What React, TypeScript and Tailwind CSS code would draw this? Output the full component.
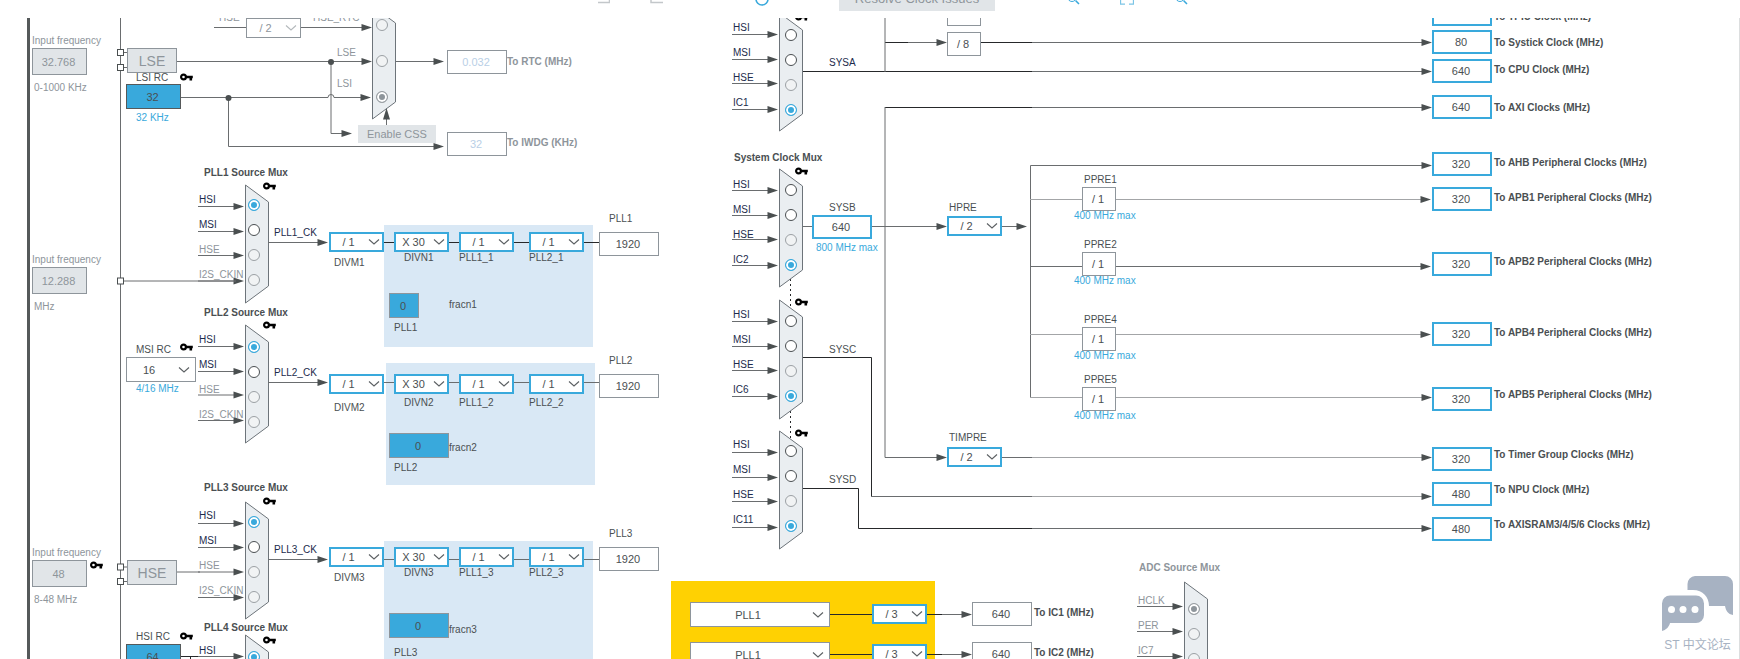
import { useId } from 'react';
import type { ReactNode } from 'react';

const tones = {
  dark: 'stroke-[#26282a]',
  mid: 'stroke-[#6a6d6f]',
  light: 'stroke-[#a3a5a7]',
};

const textColors = {
  normal: 'text-[#4a4f52]',
  navy: 'text-[#1c2b4c]',
  muted: 'text-[#8e959b]',
  blue: 'text-[#39a9dc]',
};

const boxKinds = {
  plain: 'border bg-white border-[#8e959b] text-[#4a4f52]',
  active: 'border-2 bg-white border-[#39a9dc] text-[#4a4f52]',
  filled: 'border bg-[#39a9dc] border-[#8e959b] text-[#4a4f52]',
  source: 'border bg-[#39a9dc] border-[#55595a] text-[#4a4f52]',
  off: 'border bg-[#e1e5e8] border-[#8e959b] text-[#8e959b]',
  faint: 'border bg-white border-[#8e959b] text-[#b9cfe6]',
};

type Tone = keyof typeof tones;
type TextColor = keyof typeof textColors;
type BoxKind = keyof typeof boxKinds;

interface TextProps {
  x: number;
  y: number;
  color?: TextColor;
  bold?: boolean;
  htmlFor?: string;
  children: ReactNode;
}

// y is the vertical middle of the line of text
function Text({ x, y, color = 'normal', bold, htmlFor, children }: TextProps) {
  const Tag = htmlFor ? 'label' : 'span';
  return (
    <Tag
      htmlFor={htmlFor}
      className={`absolute text-[10px] leading-3 whitespace-nowrap ${bold ? 'font-bold' : ''} ${textColors[color]}`}
      style={{ left: x, top: y - 6 }}
    >
      {children}
    </Tag>
  );
}

interface FieldProps {
  id?: string;
  x: number;
  y: number;
  w?: number;
  h?: number;
  kind?: BoxKind;
  value: string;
  name?: string;
  disabled?: boolean;
}

function Box({ id, x, y, w = 60, h = 24, kind = 'plain', value, name }: FieldProps) {
  return (
    <input
      id={id}
      aria-label={name}
      readOnly
      value={value}
      className={`absolute pr-0.5 text-center text-[11px] leading-3 outline-none ${boxKinds[kind]}`}
      style={{ left: x, top: y, width: w, height: h }}
    />
  );
}

function Drop({ id, x, y, w = 55, h = 20, kind = 'active', value, name, disabled }: FieldProps) {
  const wide = w > 55;
  return (
    <div className="absolute flex" style={{ left: x, top: y, width: w, height: h }}>
      <select
        id={id}
        aria-label={name}
        disabled={disabled}
        defaultValue={value}
        className={`block size-full appearance-none text-center text-[11px] leading-3 outline-none ${wide ? 'pr-6' : 'pr-4'} ${boxKinds[kind]} disabled:text-[#8e959b] disabled:opacity-100`}
      >
        <option>{value}</option>
      </select>
      <svg
        viewBox="0 0 12 8"
        className={`pointer-events-none absolute inset-y-0 my-auto h-2 w-3 fill-none ${wide ? 'right-1.5' : 'right-1'} ${disabled ? 'stroke-[#b4b9bc]' : 'stroke-[#5c6063]'}`}
      >
        <path d="M1 1.500 6 6l5-4.500" strokeWidth="1.100" />
      </svg>
    </div>
  );
}

function KeyIcon({ x, y }: { x: number; y: number }) {
  return (
    <svg viewBox="0 0 13 8" className="absolute h-2 w-[13px]" style={{ left: x, top: y - 4 }}>
      <circle cx="3.500" cy="4" r="2.400" fill="none" stroke="#000" strokeWidth="2.200" />
      <path d="M5.500 2.800h7.300v2.400h-.7v2.400H9.500V5.200h-4z" fill="#000" />
    </svg>
  );
}

function Wire({ d, tone = 'mid' }: { d: string; tone?: Tone }) {
  return <path d={d} fill="none" className={tones[tone]} />;
}

function Arrow({ x, y }: { x: number; y: number }) {
  return <path d={`M${x} ${y}l-10.500-3.500v7z`} fill="#4a4f50" />;
}

interface Signal {
  label: string;
  labelY: number;
  radioY: number;
  wireY: number;
  off?: boolean;
  color?: TextColor;
  checked?: boolean;
}

interface MuxProps {
  name: string;
  x: number;
  top: number;
  bottom: number;
  signals: Signal[];
  radioInset?: number;
}

function Mux({ name, x, top, bottom, signals, radioInset = 3 }: MuxProps) {
  const id = useId();
  const right = x + 23;
  return (
    <>
      <svg className="pointer-events-none absolute top-0 left-0 size-full overflow-visible">
        <path
          d={`M${x + 0.5} ${top}L${right + 0.5} ${top + 17}V${bottom - 17}L${x + 0.5} ${bottom}z`}
          fill="#eaeef1"
          stroke="#6d747a"
        />
        {signals.map((s) => (
          <g key={s.label}>
            <Wire d={`M${x - 47} ${s.wireY}H${x - 8}`} />
            <Arrow x={x - 1} y={s.wireY} />
          </g>
        ))}
      </svg>
      {signals.map((s) => (
        <div key={s.label}>
          <Text
            x={x - 46}
            y={s.labelY}
            color={s.color ?? (s.off ? 'muted' : 'navy')}
            htmlFor={`${id}${s.label}`}
          >
            {s.label}
          </Text>
          <input
            id={`${id}${s.label}`}
            type="radio"
            name={name}
            disabled={s.off}
            defaultChecked={s.checked}
            className="absolute size-3 appearance-none rounded-full border border-[#4a4f52] bg-white checked:border-[#39a9dc] checked:bg-[#39a9dc] checked:shadow-[inset_0_0_0_2px_#fff] disabled:border-[#9ba0a4] disabled:bg-[#f1f3f4] disabled:checked:bg-[#8e959b]"
            style={{ left: x + radioInset, top: s.radioY - 6 }}
          />
        </div>
      ))}
    </>
  );
}

function sourceSignals(labels: number[], radios: number[], wires: number[]): Signal[] {
  return ['HSI', 'MSI', 'HSE', 'I2S_CKIN'].map((label, i) => ({
    label,
    labelY: labels[i],
    radioY: radios[i],
    wireY: wires[i],
    off: i > 1,
    checked: i === 0,
  }));
}

function systemSignals(last: string, labelY: number, radioY: number, wireY: number): Signal[] {
  return ['HSI', 'MSI', 'HSE', last].map((label, i) => ({
    label,
    labelY: labelY + i * 25,
    radioY: radioY + i * 25,
    wireY: wireY + i * 25 - (i === 2 ? 1 : 0),
    off: i === 2,
    color: 'navy',
    checked: i === 3,
  }));
}

interface PllProps {
  n: number;
  y: number;
  wireY: number;
  labelY: number;
  subY: number;
  bgX: number;
  bgY: number;
  fracY: number;
  fracW: number;
  fracLabelY: number;
  nameY: number;
  tone: Tone;
}

// One PLL chain: DIVM -> DIVN -> two post dividers -> output value
function Pll({ n, y, wireY, labelY, subY, bgX, bgY, fracY, fracW, fracLabelY, nameY, tone }: PllProps) {
  const id = useId();
  return (
    <>
      <div className="absolute h-[122px] w-[209px] bg-[#d9e8f5]" style={{ left: bgX, top: bgY }} />
      <svg className="pointer-events-none absolute top-0 left-0 size-full overflow-visible">
        <Wire d={`M268 ${wireY}H320`} />
        <Arrow x={328} y={wireY} />
        <Wire d={`M384 ${wireY}H599`} tone={tone} />
      </svg>
      <Text x={274} y={wireY - 9.5} color="navy">{`PLL${n}_CK`}</Text>
      <Drop id={`${id}m`} x={329} y={y} value="/ 1" />
      <Text x={334} y={labelY} htmlFor={`${id}m`}>{`DIVM${n}`}</Text>
      <Drop id={`${id}n`} x={394} y={y} value="X 30" />
      <Text x={404} y={subY} htmlFor={`${id}n`}>{`DIVN${n}`}</Text>
      <Drop id={`${id}p`} x={459} y={y} value="/ 1" />
      <Text x={459} y={subY} htmlFor={`${id}p`}>{`PLL1_${n}`}</Text>
      <Drop id={`${id}q`} x={529} y={y} value="/ 1" />
      <Text x={529} y={subY} htmlFor={`${id}q`}>{`PLL2_${n}`}</Text>
      <Text x={609} y={y - 13} htmlFor={`${id}o`}>{`PLL${n}`}</Text>
      <Box id={`${id}o`} x={599} y={y} value="1920" />
      <Box id={`${id}f`} x={389} y={fracY} w={fracW} h={25} kind="filled" value="0" />
      <Text x={449} y={fracLabelY} htmlFor={`${id}f`}>{`fracn${n}`}</Text>
      <Text x={394} y={nameY}>{`PLL${n}`}</Text>
    </>
  );
}

function InputFrequency({ y, value, range }: { y: number; value: string; range: string }) {
  const id = useId();
  return (
    <>
      <Text x={32} y={y - 7} color="muted" htmlFor={id}>
        Input frequency
      </Text>
      <Box id={id} x={32} y={y} w={55} h={27} kind="off" value={value} />
      <Text x={34} y={y + 40} color="muted">
        {range}
      </Text>
    </>
  );
}

function Oscillator({ y, name }: { y: number; name: string }) {
  return (
    <button
      type="button"
      className="absolute left-[127px] h-[25px] w-[50px] border border-[#8e959b] bg-[#e1e5e8] text-sm leading-3 text-[#8e959b]"
      style={{ top: y }}
    >
      {name}
    </button>
  );
}

const outputs = [
  { label: 'To TPIU Clock (MHz)', value: '80', y: 2, labelY: 17 },
  { label: 'To Systick Clock (MHz)', value: '80', y: 30, labelY: 43 },
  { label: 'To CPU Clock (MHz)', value: '640', y: 59, labelY: 70 },
  { label: 'To AXI Clocks (MHz)', value: '640', y: 95, labelY: 108 },
  { label: 'To AHB Peripheral Clocks (MHz)', value: '320', y: 152, labelY: 163 },
  { label: 'To APB1 Peripheral Clocks (MHz)', value: '320', y: 187, labelY: 198 },
  { label: 'To APB2 Peripheral Clocks (MHz)', value: '320', y: 252, labelY: 262 },
  { label: 'To APB4 Peripheral Clocks (MHz)', value: '320', y: 322, labelY: 333 },
  { label: 'To APB5 Peripheral Clocks (MHz)', value: '320', y: 387, labelY: 395 },
  { label: 'To Timer Group Clocks (MHz)', value: '320', y: 447, labelY: 455 },
  { label: 'To NPU Clock (MHz)', value: '480', y: 482, labelY: 490 },
  { label: 'To AXISRAM3/4/5/6 Clocks (MHz)', value: '480', y: 517, labelY: 525 },
];

const busPrescalers = [
  { name: 'PPRE1', y: 187 },
  { name: 'PPRE2', y: 252 },
  { name: 'PPRE4', y: 327 },
  { name: 'PPRE5', y: 387 },
];

const rtcSignals = [
  { label: 'HSE_RTC', x: 313, y: 18, radioY: 25 },
  { label: 'LSE', x: 337, y: 53, radioY: 61 },
  { label: 'LSI', x: 337, y: 84, radioY: 97 },
];

const wires: { d: string; tone?: Tone }[] = [
  { d: 'M120.500 18V660' },
  { d: 'M120.500 52.500H127M120.500 67.500H127M120.500 567H127M120.500 581.500H127' },
  // RTC and watchdog
  { d: 'M214 27.500H246M301 27.500H364' },
  { d: 'M177 61.500H364M396 61.500H436' },
  { d: 'M181 97.500H328q0-3 3-3t3 3H364' },
  { d: 'M331 62V133.500H345' },
  { d: 'M228.500 98V146.500H436' },
  { d: 'M386.500 125V118' },
  { d: 'M181 656.500H198M190.500 656V660', tone: 'dark' },
  // system muxes
  { d: 'M802 71.500H1032M885 107.500H1032M981 42.500H1032', tone: 'dark' },
  { d: 'M1032 71.500H1424M1032 107.500H1424M1032 42.500H1424' },
  { d: 'M885 42.500H908', tone: 'dark' },
  { d: 'M908 42.500H940' },
  { d: 'M885 18V72M885 107V457.500' },
  { d: 'M802 226.500H812M872 226.500H940M1002 226.500H1020' },
  { d: 'M885 457.500H940' },
  { d: 'M802 357.500H871.500V496.500', tone: 'dark' },
  { d: 'M871 496.500H1032' },
  { d: 'M1032 496.500H1424', tone: 'light' },
  { d: 'M802 488.500H858.500V528.500H1032', tone: 'dark' },
  { d: 'M1032 528.500H1424' },
  { d: 'M1002 457.500H1032' },
  { d: 'M1032 457.500H1424', tone: 'light' },
  // bus prescalers
  { d: 'M1424 165.500H1030.500V397.500' },
  { d: 'M1030 199.500H1424M1030 334.500H1424M1030 397.500H1424', tone: 'light' },
  { d: 'M1030 266.500H1424' },
];

const arrows = [
  [372, 27.5], [372, 61.5], [444, 61.5], [352, 133.5], [444, 146.5],
  [947, 42.5], [947, 226.5], [947, 457.5], [1027, 226.5],
  [1432, 42.5], [1432, 71.5], [1432, 107.5], [1432, 165.5], [1431, 199.5], [1431, 266.5],
  [1431, 334.5], [1432, 397.5], [1432, 457.5], [1432, 496.5], [1432, 528.5],
];

const ports = [[120.5, 52.5], [120.5, 67.5], [120.5, 281], [120.5, 567], [120.5, 581.5]];

const keys = [
  [180, 77], [263, 186], [263, 325], [180, 347], [263, 501], [90, 565], [180, 636], [263, 640],
  [795, 17], [795, 171], [795, 302], [795, 433],
];

function SearchIcon() {
  return (
    <svg viewBox="0 0 14 24" className="h-6 w-3.5 fill-none stroke-[#39a9dc]">
      <circle cx="6" cy="10" r="4.500" />
      <path d="M9.500 13.500 13 17" strokeWidth="1.500" />
    </svg>
  );
}

function Toolbar() {
  return (
    <header className="h-[18px] shrink-0 overflow-hidden">
      <div className="-mt-[13px] flex h-6 items-center justify-center pl-[46px]">
        <button type="button" aria-label="Undo" className="mr-10">
          <svg viewBox="0 0 12 24" className="h-6 w-3 fill-none stroke-[#c3c7ca]">
            <path d="M0 15.500h11.500V8H2" strokeWidth="1.500" />
          </svg>
        </button>
        <button type="button" aria-label="Redo" className="mr-[92px]">
          <svg viewBox="0 0 13 24" className="h-6 w-[13px] fill-none stroke-[#c3c7ca]">
            <path d="M13 15.500H1V8h10" strokeWidth="1.500" />
          </svg>
        </button>
        <button type="button" aria-label="Refresh" className="mr-[70px]">
          <svg viewBox="0 0 14 24" className="h-6 w-3.5 fill-none stroke-[#39a9dc]">
            <circle cx="7" cy="12" r="6" strokeWidth="1.600" />
          </svg>
        </button>
        <button type="button" className="h-6 w-[156px] bg-[#e1e5e8] text-[13px] text-[#8e959b]">
          Resolve Clock Issues
        </button>
        <button type="button" aria-label="Zoom in" className="ml-[71px]">
          <SearchIcon />
        </button>
        <button type="button" aria-label="Fit" className="mx-10">
          <svg viewBox="0 0 14 24" className="h-6 w-3.5 fill-none stroke-[#7cc5e6]">
            <path d="M.5 13v4.200H5M13.500 13v4.200H9M.5 9V4.500H5M13.500 9V4.500H9" strokeWidth="1.300" />
          </svg>
        </button>
        <button type="button" aria-label="Zoom out">
          <SearchIcon />
        </button>
      </div>
    </header>
  );
}

function ForumBadge() {
  return (
    <a href="#forum" className="absolute right-1.5 bottom-1.5 flex flex-col items-center gap-1.5 text-[#a7b2c2]">
      <svg viewBox="0 0 71 55" className="h-[55px] w-[71px]" fill="currentColor">
        <path d="M33 0h30a8 8 0 0 1 8 8v31c-5-1-7-4-8-9H47C47 21 41 14 31 14H25.500V8A8 8 0 0 1 33 0z" />
        <path d="M8 19.500h26a8 8 0 0 1 8 8V39a8 8 0 0 1-8 8H8c-1 4-4 7-8 8V27.500a8 8 0 0 1 8-8z" />
        <g fill="#fff">
          <circle cx="9.500" cy="33.500" r="3.500" />
          <circle cx="21" cy="33.500" r="3.500" />
          <circle cx="33" cy="33.500" r="3.500" />
        </g>
      </svg>
      <span className="text-xs leading-4 whitespace-nowrap">ST 中文论坛</span>
    </a>
  );
}

export default function App() {
  return (
    <div className="flex h-screen flex-col overflow-hidden bg-white font-['Liberation_Sans','Noto_Sans_CJK_SC',sans-serif]">
      <Toolbar />
      <main className="relative flex-1 overflow-hidden border-r border-[#dcdedf]">
        {/* diagram is scrolled up under the toolbar */}
        <div className="absolute inset-x-0 -top-[18px] bottom-0">
          <div className="absolute top-0 bottom-0 left-[27px] w-[3px] bg-[#55595a]" />
          <div className="absolute top-[581px] bottom-0 left-[671px] w-[264px] bg-[#ffd102]" />

          <svg className="pointer-events-none absolute top-0 left-0 size-full overflow-visible">
            {wires.map((w) => (
              <Wire key={w.d} d={w.d} tone={w.tone} />
            ))}
            {arrows.map(([x, y]) => (
              <Arrow key={`${x}-${y}`} x={x} y={y} />
            ))}
            <path d="M790.500 279V308M790.500 411V439" stroke="#26282a" strokeDasharray="2 3" />
          </svg>

          {/* low speed sources */}
          <InputFrequency y={48} value="32.768" range="0-1000 KHz" />
          <InputFrequency y={267} value="12.288" range="MHz" />
          <InputFrequency y={560} value="48" range="8-48 MHz" />
          <Oscillator y={48} name="LSE" />
          <Oscillator y={560} name="HSE" />
          <Text x={136} y={78} htmlFor="lsi">LSI RC</Text>
          <Box id="lsi" x={126} y={84} w={55} h={25} kind="source" value="32" />
          <Text x={136} y={118} color="blue">32 KHz</Text>
          <Text x={136} y={350} htmlFor="msi">MSI RC</Text>
          <Drop id="msi" x={126} y={357} w={70} h={25} kind="plain" value="16" />
          <Text x={136} y={389} color="blue">4/16 MHz</Text>
          <Text x={136} y={637} htmlFor="hsi">HSI RC</Text>
          <Box id="hsi" x={126} y={644} w={55} h={25} kind="source" value="64" />

          {/* RTC */}
          <Text x={219} y={18} color="muted" htmlFor="hse-rtc">HSE</Text>
          <Drop id="hse-rtc" x={246} y={18} kind="plain" value="/ 2" disabled />
          <Mux name="rtc" x={372} top={6} bottom={119} signals={[]} />
          {rtcSignals.map((s) => (
            <div key={s.label}>
              <Text x={s.x} y={s.y} color="muted" htmlFor={`rtc-${s.label}`}>{s.label}</Text>
              <input
                id={`rtc-${s.label}`}
                type="radio"
                name="rtc"
                disabled
                defaultChecked={s.label === 'LSI'}
                className="absolute left-[376px] size-3 appearance-none rounded-full border border-[#9ba0a4] bg-[#f1f3f4] checked:bg-[#8e959b] checked:shadow-[inset_0_0_0_2px_#fff]"
                style={{ top: s.radioY - 6 }}
              />
            </div>
          ))}
          <Box id="rtc-out" x={447} y={50} kind="faint" value="0.032" />
          <Text x={507} y={62} bold color="muted" htmlFor="rtc-out">To RTC (MHz)</Text>
          <Box id="iwdg-out" x={447} y={132} kind="faint" value="32" />
          <Text x={507} y={143} bold color="muted" htmlFor="iwdg-out">To IWDG (KHz)</Text>
          <button
            type="button"
            disabled
            className="absolute top-[125px] left-[358px] h-[18px] w-[78px] bg-[#e1e5e8] text-[11px] leading-3 text-[#8e959b]"
          >
            Enable CSS
          </button>

          {/* PLL sources */}
          <Text x={204} y={173} bold>PLL1 Source Mux</Text>
          <Mux
            name="pll1"
            x={245}
            top={185}
            bottom={303}
            signals={sourceSignals([200, 225, 250, 275], [205, 230, 255, 280], [206.5, 231.5, 255.5, 281])}
          />
          <Text x={204} y={313} bold>PLL2 Source Mux</Text>
          <Mux
            name="pll2"
            x={245}
            top={325}
            bottom={443}
            signals={sourceSignals([340, 365, 390, 415], [347, 372, 397, 422], [346.5, 371.5, 395, 420.5])}
          />
          <Text x={204} y={488} bold>PLL3 Source Mux</Text>
          <Mux
            name="pll3"
            x={245}
            top={502}
            bottom={619}
            signals={sourceSignals([516, 541, 566, 591], [522, 547, 572, 597], [523.5, 547.5, 572, 597.5])}
          />
          <Text x={204} y={628} bold>PLL4 Source Mux</Text>
          <Mux
            name="pll4"
            x={245}
            top={635}
            bottom={753}
            signals={sourceSignals([651, 676, 701, 726], [657, 682, 707, 732], [656.5, 681.5, 706.5, 731.5])}
          />
          <Pll n={1} y={232} wireY={242.5} labelY={263} subY={258} bgX={384} bgY={225} fracY={293} fracW={30} fracLabelY={305} nameY={328} tone="dark" />
          <Pll n={2} y={374} wireY={382.5} labelY={408} subY={403} bgX={386} bgY={363} fracY={433} fracW={60} fracLabelY={448} nameY={468} tone="mid" />
          <Pll n={3} y={547} wireY={559.5} labelY={578} subY={573} bgX={384} bgY={541} fracY={613} fracW={60} fracLabelY={630} nameY={653} tone="mid" />

          {/* system clocks */}
          <Mux name="sysa" x={779} top={13} bottom={131} radioInset={6} signals={systemSignals('IC1', 28, 35, 34.5)} />
          <Text x={829} y={63} color="navy">SYSA</Text>
          <Text x={734} y={158} bold>System Clock Mux</Text>
          <Mux name="sysb" x={779} top={169} bottom={287} radioInset={6} signals={systemSignals('IC2', 185, 190, 190.5)} />
          <Text x={829} y={208} htmlFor="sysb">SYSB</Text>
          <Box id="sysb" x={812} y={215} kind="active" value="640" />
          <Text x={816} y={248} color="blue">800 MHz max</Text>
          <Mux name="sysc" x={779} top={300} bottom={419} radioInset={6} signals={systemSignals('IC6', 315, 321, 321.5)} />
          <Text x={829} y={350}>SYSC</Text>
          <Mux name="sysd" x={779} top={431} bottom={549} radioInset={6} signals={systemSignals('IC11', 445, 451, 452.5)} />
          <Text x={829} y={480}>SYSD</Text>

          {/* prescalers */}
          <Box name="TPIU" x={947} y={2} w={34} value="" />
          <Box name="Systick" x={947} y={32} w={34} value="/ 8" />
          <Text x={949} y={208} htmlFor="hpre">HPRE</Text>
          <Drop id="hpre" x={947} y={216} value="/ 2" />
          <Text x={949} y={438} htmlFor="timpre">TIMPRE</Text>
          <Drop id="timpre" x={947} y={447} value="/ 2" />
          {busPrescalers.map((p) => (
            <div key={p.name}>
              <Text x={1084} y={p.y - 7} htmlFor={p.name}>{p.name}</Text>
              <Box id={p.name} x={1082} y={p.y} w={34} value="/ 1" />
              <Text x={1074} y={p.y + 29} color="blue">400 MHz max</Text>
            </div>
          ))}

          {/* outputs */}
          {outputs.map((o) => (
            <div key={o.label}>
              <Box id={o.label} x={1432} y={o.y} kind="active" value={o.value} />
              <Text x={1494} y={o.labelY} bold htmlFor={o.label}>{o.label}</Text>
            </div>
          ))}

          {/* IC dividers */}
          {[602, 642].map((y, i) => {
            const n = i + 1;
            return (
              <div key={n}>
                <svg className="pointer-events-none absolute top-0 left-0 size-full overflow-visible">
                  <Wire d={`M830 ${y + 12.5}H872M927 ${y + 12.5}H942`} tone="dark" />
                  <Wire d={`M942 ${y + 12.5}H964`} />
                  <Arrow x={972} y={y + 12.5} />
                </svg>
                <Drop name={`IC${n} source`} x={690} y={y} w={140} h={25} kind="plain" value="PLL1" />
                <Drop name={`IC${n} divider`} x={872} y={y + 2} value="/ 3" />
                <Box id={`ic${n}`} x={972} y={y} value="640" />
                <Text x={1034} y={y + 11} bold htmlFor={`ic${n}`}>{`To IC${n} (MHz)`}</Text>
              </div>
            );
          })}

          {/* ADC */}
          <Text x={1139} y={568} bold color="muted">ADC Source Mux</Text>
          <Mux
            name="adc"
            x={1184}
            top={582}
            bottom={700}
            radioInset={4}
            signals={[
              { label: 'HCLK', labelY: 601, radioY: 609, wireY: 606.5, off: true, checked: true },
              { label: 'PER', labelY: 626, radioY: 634, wireY: 631.5, off: true },
              { label: 'IC7', labelY: 651, radioY: 659, wireY: 656.5, off: true },
            ]}
          />

          <svg className="pointer-events-none absolute top-0 left-0 size-full overflow-visible">
            <Wire d="M123 281H236M177 572H200" />
            {ports.map(([x, y]) => (
              <rect key={y} x={x - 3} y={y - 3} width="6" height="6" fill="#fff" stroke="#4a4f50" />
            ))}
            <circle cx="331" cy="62" r="3" fill="#4a4f50" />
            <circle cx="228.500" cy="98" r="3" fill="#4a4f50" />
            <path d="M371 97.500l-10.500-3.500v7zM386.500 108l-3.500 11.500h7z" fill="#4a4f50" />
          </svg>
          {keys.map(([x, y]) => (
            <KeyIcon key={`${x}-${y}`} x={x} y={y} />
          ))}
        </div>
        <ForumBadge />
      </main>
    </div>
  );
}
